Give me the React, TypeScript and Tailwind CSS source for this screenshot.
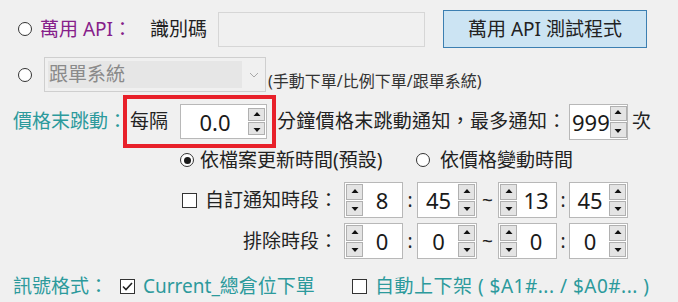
const font = "font-['Noto_Sans','Noto_Sans_CJK_TC',sans-serif]";

function Radio({ checked = false }: { checked?: boolean }) {
  return (
    <span className="flex h-[14px] w-[14px] shrink-0 items-center justify-center rounded-full border border-[#333] bg-white">
      {checked && <span className="h-[7px] w-[7px] rounded-full bg-[#1a1a1a]" />}
    </span>
  );
}

function Check({ checked = false }: { checked?: boolean }) {
  return (
    <span className="flex h-[15px] w-[15px] shrink-0 items-center justify-center border border-[#333] bg-white">
      {checked && (
        <svg width="11" height="9" viewBox="0 0 11 9">
          <path d="M1 4.5L4 7.5L10 1" fill="none" stroke="#222" strokeWidth="1.6" />
        </svg>
      )}
    </span>
  );
}

function Arrows() {
  return (
    <div className="flex h-full w-[17px] shrink-0 flex-col gap-[1px] py-[1px]">
      <div className="flex flex-1 items-center justify-center border border-[#b0b0b0] bg-[#e4e4e4]">
        <svg width="8" height="6" viewBox="0 0 8 6">
          <path d="M4 0L7.5 4H0.5z" fill="#111" />
        </svg>
      </div>
      <div className="flex flex-1 items-center justify-center border border-[#b0b0b0] bg-[#e4e4e4]">
        <svg width="8" height="6" viewBox="0 0 8 6">
          <path d="M0.5 2H7.5L4 6z" fill="#111" />
        </svg>
      </div>
    </div>
  );
}

function Spin({ value, left = false, w = "w-[59px]" }: { value: string; left?: boolean; w?: string }) {
  return (
    <div className={`flex h-[36px] ${w} items-stretch border border-[#b8b8b8] bg-white px-[1px]`}>
      {left && <Arrows />}
      <div className="flex flex-1 items-center justify-center text-[22px] leading-none text-[#1a1a1a]">{value}</div>
      {!left && <Arrows />}
    </div>
  );
}

function TimeRow({ a, b, c, d }: { a: string; b: string; c: string; d: string }) {
  return (
    <div className="flex items-center text-[19px] text-[#222]">
      <Spin value={a} left />
      <span className="w-[14px] text-center">:</span>
      <Spin value={b} w="w-[60px]" />
      <span className="w-[21px] text-center">~</span>
      <Spin value={c} left />
      <span className="w-[12px] text-center">:</span>
      <Spin value={d} />
    </div>
  );
}

export default function App() {
  return (
    <div className={`h-[302px] w-[678px] overflow-hidden bg-[#f0f0f0] text-[19px] text-[#222] ${font}`}>
      <div className="flex flex-col pt-[10px]">
        {/* row 1 */}
        <div className="flex h-[38px] items-center pl-[18px]">
          <Radio />
          <span className="ml-[8px] w-[110px] whitespace-nowrap text-[#86208a]">萬用 API：</span>
          <span className="w-[68px] whitespace-nowrap">識別碼</span>
          <div className="h-[35px] w-[207px] border border-[#d6d6d6] bg-[#f0f0f0]" />
          <button className="ml-[18px] flex h-[38px] w-[204px] items-center justify-center border border-[#3c7fb1] bg-[#cce4f3] text-[19px] text-[#222]">
            萬用 API 測試程式
          </button>
        </div>

        {/* row 2 */}
        <div className="mt-[9px] flex h-[35px] items-center pl-[18px]">
          <Radio />
          <div className="ml-[12px] flex h-[35px] w-[222px] items-center border border-[#cfcfcf] bg-[#f0f0f0] p-[3px]">
            <div className="flex h-full w-[194px] items-center bg-[#e6e6e6] pl-[1px] text-[19px] text-[#8a8a8a]">跟單系統</div>
            <svg className="ml-[7px]" width="10" height="6" viewBox="0 0 10 6">
              <path d="M1 1L5 5L9 1" fill="none" stroke="#a8a8a8" strokeWidth="1" />
            </svg>
          </div>
          <span className="ml-[2px] mt-[12px] whitespace-nowrap text-[16px] text-[#333]">(手動下單/比例下單/跟單系統)</span>
        </div>

        {/* row 3 */}
        <div className="mt-[3px] flex h-[53px] items-center pl-[13px]">
          <span className="w-[110px] whitespace-nowrap text-[#2c9a9c]">價格末跳動：</span>
          <div className="relative flex h-[53px] w-[153px] items-center border-[4px] border-[#e8202a] pl-[3px]">
            <span className="w-[50px] whitespace-nowrap">每隔</span>
            <div className="flex h-[35px] w-[87px] items-stretch border border-[#b8b8b8] bg-white px-[1px] py-[2px]">
              <div className="flex flex-1 items-center justify-center text-[22px] leading-none text-[#1a1a1a]">0.0</div>
              <Arrows />
            </div>
          </div>
          <span className="ml-[1px] w-[292px] whitespace-nowrap tracking-[0.3px]">分鐘價格末跳動通知，最多通知：</span>
          <div className="flex h-[36px] w-[59px] items-stretch border border-[#b8b8b8] bg-white px-[1px]">
            <div className="flex flex-1 items-center pl-[1px] text-[22px] leading-none text-[#1a1a1a]">999</div>
            <Arrows />
          </div>
          <span className="ml-[4px]">次</span>
        </div>

        {/* row 4 */}
        <div className="mt-[2px] flex h-[20px] items-center pl-[180px]">
          <Radio checked />
          <span className="ml-[6px] w-[216px] whitespace-nowrap">依檔案更新時間(預設)</span>
          <Radio />
          <span className="ml-[10px] whitespace-nowrap">依價格變動時間</span>
        </div>

        {/* row 5 */}
        <div className="mt-[12px] flex items-center">
          <div className="flex w-[344px] items-center justify-end pr-[6px]">
            <Check />
            <span className="ml-[8px] whitespace-nowrap">自訂通知時段：</span>
          </div>
          <TimeRow a="8" b="45" c="13" d="45" />
        </div>

        {/* row 6 */}
        <div className="mt-[5px] flex items-center">
          <div className="flex w-[344px] items-center justify-end pr-[6px]">
            <span className="whitespace-nowrap">排除時段：</span>
          </div>
          <TimeRow a="0" b="0" c="0" d="0" />
        </div>

        {/* row 7 */}
        <div className="mt-[16px] flex h-[22px] items-center pl-[13px] text-[#2c9a9c]">
          <span className="w-[107px] whitespace-nowrap">訊號格式：</span>
          <Check checked />
          <span className="ml-[8px] w-[209px] whitespace-nowrap">Current_總倉位下單</span>
          <Check />
          <span className="ml-[8px] whitespace-nowrap tracking-[0.5px]">自動上下架 ( $A1#... / $A0#... )</span>
        </div>
      </div>
    </div>
  );
}
